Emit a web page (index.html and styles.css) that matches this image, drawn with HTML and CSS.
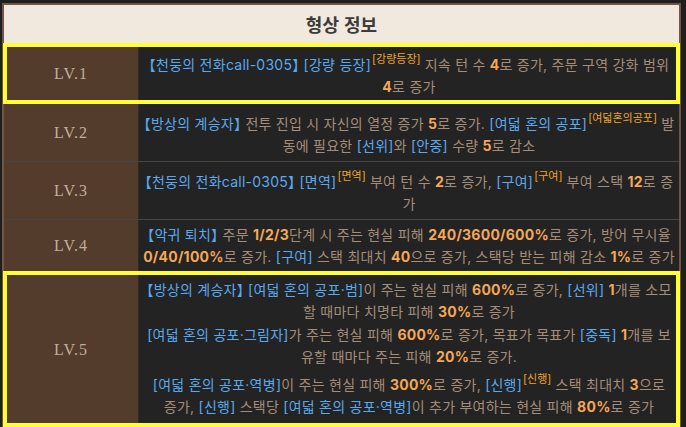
FILE: index.html
```html
<!DOCTYPE html>
<html lang="ko">
<head>
    <meta charset="UTF-8">
    <meta name="viewport" content="width=device-width, initial-scale=1.0">
    <title>형상 정보</title>
    <link rel="stylesheet" href="styles.css">
</head>
<body>
    <div class="panel">
        <div class="panel-head">형상 정보</div>

        <div class="lv-row is-active">
            <div class="lv-name">LV.1</div>
            <div class="lv-desc">
                <p><span class="term">【천둥의 전화call-0305】 [강량 등장]</span><sup class="tag">[강량등장]</sup> 지속 턴 수 <b class="num">4</b>로 증가, 주문 구역 강화 범위 <b class="num">4</b>로 증가</p>
            </div>
        </div>

        <div class="lv-row">
            <div class="lv-name">LV.2</div>
            <div class="lv-desc">
                <p><span class="term">【방상의 계승자】</span> 전투 진입 시 자신의 열정 증가 <b class="num">5</b>로 증가. <span class="term">[여덟 혼의 공포]</span><sup class="tag">[여덟혼의공포]</sup> 발동에 필요한 <span class="term">[선위]</span>와 <span class="term">[안중]</span> 수량 <b class="num">5</b>로 감소</p>
            </div>
        </div>

        <div class="lv-row">
            <div class="lv-name">LV.3</div>
            <div class="lv-desc">
                <p><span class="term">【천둥의 전화call-0305】 [면역]</span><sup class="tag">[면역]</sup> 부여 턴 수 <b class="num">2</b>로 증가, <span class="term">[구여]</span><sup class="tag">[구여]</sup> 부여 스택 <b class="num">12</b>로 증가</p>
            </div>
        </div>

        <div class="lv-row">
            <div class="lv-name">LV.4</div>
            <div class="lv-desc">
                <p><span class="term">【악귀 퇴치】</span> 주문 <b class="num">1/2/3</b>단계 시 주는 현실 피해 <b class="num">240/3600/600%</b>로 증가, 방어 무시율 <b class="num">0/40/100%</b>로 증가. <span class="term">[구여]</span> 스택 최대치 <b class="num">40</b>으로 증가, 스택당 받는 피해 감소 <b class="num">1%</b>로 증가</p>
            </div>
        </div>

        <div class="lv-row is-active">
            <div class="lv-name">LV.5</div>
            <div class="lv-desc lv-desc--list">
                <p><span class="term">【방상의 계승자】 [여덟 혼의 공포·범]</span>이 주는 현실 피해 <b class="num">600%</b>로 증가, <span class="term">[선위]</span> <b class="num">1</b>개를 소모할 때마다 치명타 피해 <b class="num">30%</b>로 증가</p>
                <p><span class="term">[여덟 혼의 공포·그림자]</span>가 주는 현실 피해 <b class="num">600%</b>로 증가, 목표가 목표가 <span class="term">[중독]</span> <b class="num">1</b>개를 보유할 때마다 주는 피해 <b class="num">20%</b>로 증가.</p>
                <p><span class="term">[여덟 혼의 공포·역병]</span>이 주는 현실 피해 <b class="num">300%</b>로 증가, <span class="term">[신행]</span><sup class="tag">[신행]</sup> 스택 최대치 <b class="num">3</b>으로 증가, <span class="term">[신행]</span> 스택당 <span class="term">[여덟 혼의 공포·역병]</span>이 추가 부여하는 현실 피해 <b class="num">80%</b>로 증가</p>
            </div>
        </div>
    </div>
</body>
</html>
```

FILE: styles.css
```css
body {
    margin: 0;
    background: #1f1f1f;
    font-family: Inter, "Noto Sans CJK KR", sans-serif;
}
.panel {
    margin: 3px 5px 2px 2px;
    border: 2px solid #6f5646;
    background: #232323;
}
.panel-head {
    height: 38px;
    display: flex;
    align-items: center;
    justify-content: center;
    background: #f1e8de;
    border-bottom: 1px solid #2f2f45;
    color: #3b3b3b;
    font-family: "Noto Sans CJK KR", sans-serif;
    font-size: 18px;
    font-weight: bold;
}
.lv-row {
    display: grid;
    grid-template-columns: 135px 1fr;
    border-top: 1px solid #454545;
}
.panel-head + .lv-row {
    border-top: none;
}
.lv-row.is-active {
    outline: 4px solid #ffff33;
    outline-offset: -3px;
}
.lv-name {
    display: flex;
    align-items: center;
    justify-content: center;
    background: #533c2c;
    border-right: 1px solid #2b2b2b;
    color: #c0ae9c;
    font-family: "Liberation Serif", serif;
    font-size: 16px;
    letter-spacing: 1px;
}
.lv-desc {
    padding: 4px;
    text-align: center;
    color: #a38d78;
    font-size: 14px;
    line-height: 22px;
    letter-spacing: 0.25px;
    font-feature-settings: "halt";
}
.panel-head + .lv-row .lv-desc {
    padding: 5px 4px;
}
.lv-desc p {
    margin: 0;
}
.lv-desc--list {
    padding: 6px 4px 8px;
}
.lv-desc--list p {
    padding: 0 2px;
}
.lv-desc--list p + p {
    margin-top: 1px;
}
.term {
    color: #5aa9ec;
}
.num {
    color: #f3a758;
}
.tag {
    margin-left: 1px;
    color: #f0a323;
    font-size: 11px;
    line-height: 20px;
    vertical-align: 7px;
    letter-spacing: 0;
}
```
